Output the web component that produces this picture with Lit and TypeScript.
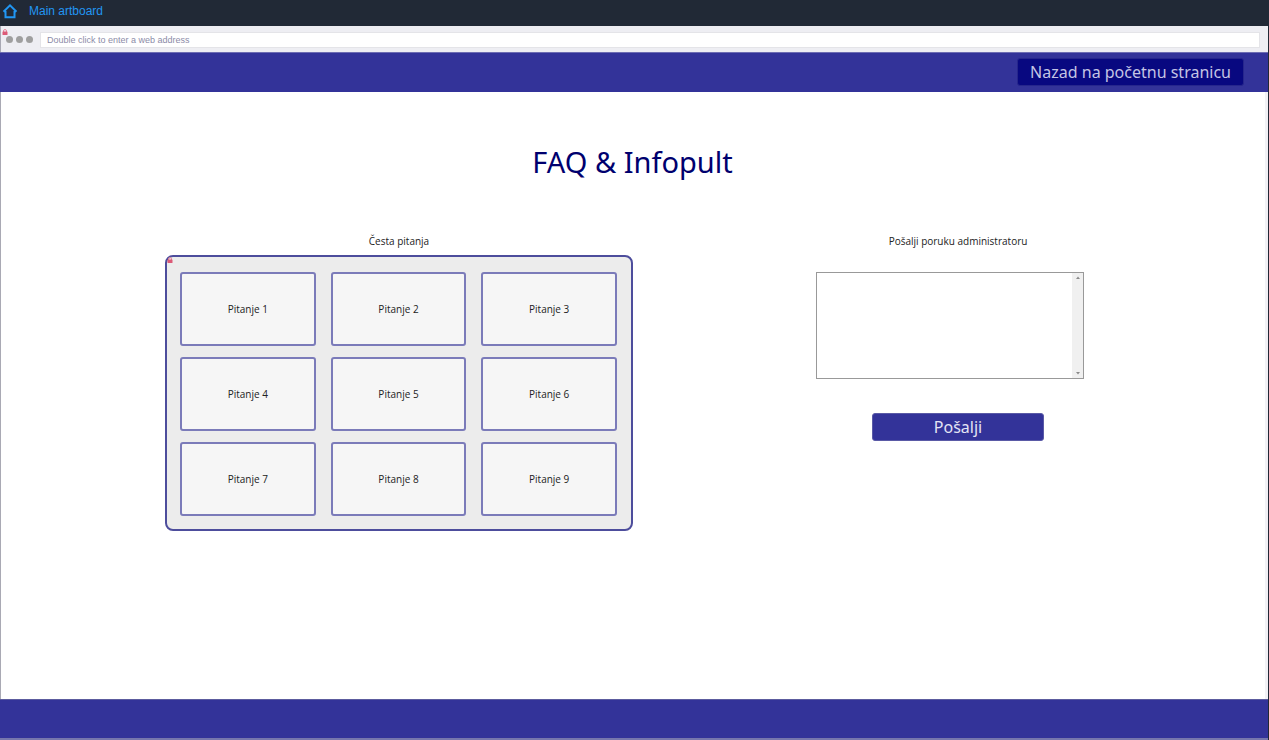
import { LitElement, html, css } from "lit";
import { customElement, property } from "lit/decorators.js";

@customElement("browser-bar")
class BrowserBar extends LitElement {
  static styles = css`
    :host {
      display: block;
      font-family: "Liberation Sans", Arial, sans-serif;
    }
    .bar {
      position: relative;
      display: flex;
      align-items: center;
      gap: 7px;
      height: 26px;
      padding: 1px 8px 0 5px;
      box-sizing: border-box;
      background: #eeeef3;
    }
    .dots {
      display: flex;
      gap: 3px;
    }
    .dot {
      width: 7px;
      height: 7px;
      border-radius: 50%;
      background: #9f9f9f;
    }
    .address {
      flex: 1;
      min-width: 0;
      height: 16px;
      box-sizing: border-box;
      padding: 0 6px;
      border: 1px solid #e4e4e8;
      background: #fff;
      color: #85859f;
      font: 9px "Liberation Sans", Arial, sans-serif;
      outline: none;
    }
    .address::placeholder {
      color: #8c8ca8;
      opacity: 1;
    }
    .lock {
      position: absolute;
      left: 1px;
      top: 3px;
    }
  `;

  render() {
    return html`
      <div class="bar">
        <div class="dots">
          <span class="dot"></span><span class="dot"></span><span class="dot"></span>
        </div>
        <input
          class="address"
          type="text"
          aria-label="Web address"
          placeholder="Double click to enter a web address"
        />
        <lock-mark class="lock"></lock-mark>
      </div>
    `;
  }
}

@customElement("lock-mark")
class LockMark extends LitElement {
  static styles = css`
    :host {
      display: block;
      line-height: 0;
    }
  `;

  render() {
    return html`
      <svg width="6" height="7" viewBox="0 0 6 7" aria-hidden="true">
        <path d="M1.5 3V2a1.4 1.4 0 0 1 3 0v1" fill="none" stroke="#e5879c" />
        <rect x="0.5" y="2.5" width="5" height="3.5" rx="0.6" fill="#dc5a77" />
      </svg>
    `;
  }
}

@customElement("question-grid")
class QuestionGrid extends LitElement {
  @property({ type: Array }) questions: string[] = [];

  static styles = css`
    :host {
      display: block;
    }
    .panel {
      position: relative;
      display: grid;
      grid-template-columns: repeat(3, minmax(0, 1fr));
      gap: 11px 15px;
      padding: 15px 14px 13px 13px;
      border: 2px solid #4d4d9c;
      border-radius: 8px;
      background: #ececec;
    }
    .card {
      height: 74px;
      padding: 0;
      border: 2px solid #7b7bb9;
      border-radius: 3px;
      background: #f6f6f6;
      color: #222;
      font: 10px "Open Sans", "Noto Sans", sans-serif;
    }
    .lock {
      position: absolute;
      left: 0;
      top: 0;
    }
  `;

  render() {
    return html`
      <div class="panel">
        ${this.questions.map(
          (q) => html`<button class="card" type="button">${q}</button>`
        )}
        <lock-mark class="lock"></lock-mark>
      </div>
    `;
  }
}

@customElement("message-form")
class MessageForm extends LitElement {
  static styles = css`
    :host {
      display: block;
    }
    .form {
      display: flex;
      flex-direction: column;
      align-items: center;
    }
    .label {
      color: #222;
      font: 10px/14px "Open Sans", "Noto Sans", sans-serif;
      margin-bottom: 24px;
    }
    .field {
      position: relative;
      align-self: flex-start;
      width: 268px;
      max-width: 100%;
      margin-bottom: 34px;
    }
    .message {
      display: block;
      width: 100%;
      height: 107px;
      box-sizing: border-box;
      padding: 4px 16px 4px 4px;
      border: 1px solid #999;
      border-radius: 0;
      background: #fff;
      font: 10px "Noto Sans", sans-serif;
      resize: none;
      outline: none;
      scrollbar-width: none;
    }
    .track {
      position: absolute;
      top: 1px;
      right: 1px;
      bottom: 1px;
      width: 11px;
      display: flex;
      flex-direction: column;
      align-items: center;
      justify-content: space-between;
      padding: 3px 0;
      box-sizing: border-box;
      background: #f0f0f0;
      pointer-events: none;
    }
    .send {
      width: 172px;
      height: 28px;
      padding: 0;
      border: 1px solid #5a5aa6;
      border-radius: 3px;
      background: #333399;
      color: #e4e4f4;
      font: 16px/24px "Noto Sans", sans-serif;
    }
  `;

  render() {
    return html`
      <form class="form" @submit=${(e: Event) => e.preventDefault()}>
        <label class="label" for="message">Pošalji poruku administratoru</label>
        <div class="field">
          <textarea class="message" id="message"></textarea>
          <div class="track" aria-hidden="true">
            <svg width="4" height="3" viewBox="0 0 4 3"><path d="M0 3 2 0.5 4 3z" fill="#8a8a8a" /></svg>
            <svg width="4" height="3" viewBox="0 0 4 3"><path d="M0 0 2 2.5 4 0z" fill="#8a8a8a" /></svg>
          </div>
        </div>
        <button class="send" type="submit">Pošalji</button>
      </form>
    `;
  }
}

@customElement("app-root")
class AppRoot extends LitElement {
  private questions = Array.from({ length: 9 }, (_, i) => `Pitanje ${i + 1}`);

  static styles = css`
    :host {
      display: flex;
      flex-direction: column;
      min-height: 100vh;
      background: #fff;
      font-family: "Noto Sans", sans-serif;
    }
    .topbar {
      display: flex;
      align-items: center;
      height: 26px;
      padding: 0 2px 4px;
      box-sizing: border-box;
      background: #212936;
    }
    .artboard {
      display: flex;
      align-items: center;
      gap: 11px;
      color: #2196f3;
      font: 12px/16px "Liberation Sans", Arial, sans-serif;
      text-decoration: none;
    }
    .home {
      display: block;
    }
    .frame {
      flex: 1;
      display: flex;
      flex-direction: column;
      border-left: 1px solid #a9a9b4;
      border-right: 1px solid #212936;
    }
    .header,
    .footer {
      margin-left: -1px;
      box-sizing: border-box;
      background: #333399;
    }
    .header {
      display: flex;
      align-items: center;
      justify-content: flex-end;
      height: 40px;
      padding: 0 24px 2px 0;
      border-top: 1px solid #6d6db3;
    }
    .back {
      height: 28px;
      padding: 0 12px;
      border: 1px solid #26268c;
      border-radius: 3px;
      background: #080880;
      color: #c4c4e4;
      font: 16px/24px "Noto Sans", sans-serif;
    }
    .main {
      flex: 1;
      padding: 48px 165px 0 164px;
      border-right: 3px solid #f1f1f5;
    }
    .title {
      margin: 0 0 50px;
      color: #00006e;
      font-size: 29px;
      font-weight: 400;
      line-height: 44px;
      text-align: center;
    }
    .columns {
      display: flex;
      flex-wrap: wrap;
      justify-content: space-between;
      align-items: flex-start;
      gap: 24px;
    }
    .faq {
      flex: 0 1 468px;
    }
    .contact {
      flex: 0 1 284px;
    }
    .caption {
      margin: 0 0 7px;
      color: #222;
      font: 400 10px/14px "Open Sans", "Noto Sans", sans-serif;
      text-align: center;
    }
    .footer {
      height: 41px;
      border-top: 1px solid #5c5c9e;
      border-bottom: 2px solid #7777ad;
    }
  `;

  render() {
    return html`
      <nav class="topbar">
        <a class="artboard" href="#">
          <svg class="home" width="16" height="16" viewBox="0 0 16 16" aria-hidden="true">
            <path
              d="M1.5 8.8 8 2.3l6.5 6.5M3.5 8v6.3h9V8"
              fill="none"
              stroke="#2196f3"
              stroke-width="2"
            />
          </svg>
          Main artboard
        </a>
      </nav>
      <div class="frame">
        <browser-bar></browser-bar>
        <header class="header">
          <button class="back" type="button">Nazad na početnu stranicu</button>
        </header>
        <main class="main">
          <h1 class="title">FAQ &amp; Infopult</h1>
          <div class="columns">
            <section class="faq">
              <h2 class="caption">Česta pitanja</h2>
              <question-grid .questions=${this.questions}></question-grid>
            </section>
            <message-form class="contact"></message-form>
          </div>
        </main>
        <footer class="footer"></footer>
      </div>
    `;
  }
}
